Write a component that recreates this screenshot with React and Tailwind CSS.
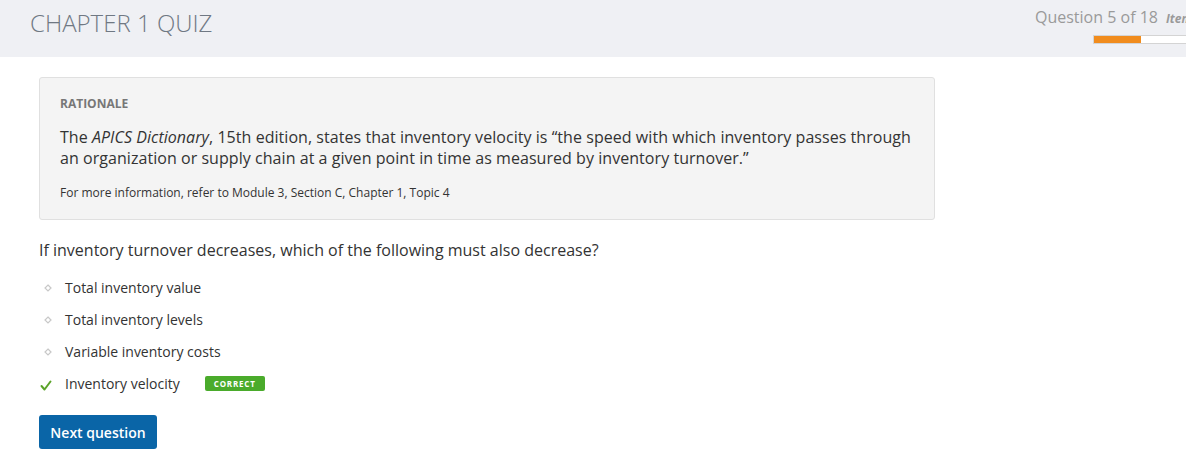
import React from 'react';

const options = [
  { label: 'Total inventory value', correct: false },
  { label: 'Total inventory levels', correct: false },
  { label: 'Variable inventory costs', correct: false },
  { label: 'Inventory velocity', correct: true },
];

const Bullet = () => (
  <svg width="8" height="8" viewBox="0 0 8 8" className="mt-px">
    <path d="M4 1 L7 4 L4 7 L1 4 Z" fill="none" stroke="#c8c8c8" strokeWidth="1.2" />
  </svg>
);

const Check = () => (
  <svg width="12" height="11" viewBox="0 0 12 11" className="mt-[4px]">
    <path d="M1.5 6 L4.5 9.5 L10.5 1.5" fill="none" stroke="#5ba329" strokeWidth="2" strokeLinecap="round" strokeLinejoin="round" />
  </svg>
);

export default function App() {
  return (
    <div className="w-[1186px] h-[465px] overflow-hidden bg-white font-['Open_Sans',sans-serif] text-[#333]">
      {/* header */}
      <div className="h-[57px] bg-[#eff0f4] flex overflow-hidden">
        <h1 className="flex-1 pl-[30px] pt-[5px] text-[24px] font-light text-[#6f7883]">CHAPTER 1 QUIZ</h1>
        <div className="w-[151px] shrink-0 pt-[5px] overflow-hidden">
          <div className="flex items-baseline gap-[8px] whitespace-nowrap">
            <span className="text-[16px] text-[#9a9a9a]">Question 5 of 18</span>
            <span className="text-[12px] italic font-bold text-[#9a9a9a]">Item</span>
          </div>
          <div className="mt-[6px] ml-[58px] w-[133px] h-[9px] bg-white border border-[#d4d4d4]">
            <div className="w-[47px] h-full bg-[#f18c1d]"></div>
          </div>
        </div>
      </div>

      <div className="pl-[39px] pt-[20px]">
        {/* rationale */}
        <div className="w-[896px] h-[143px] bg-[#f4f4f4] border border-[#e0e0e0] rounded-[3px] px-[20px] pt-[17px]">
          <div className="text-[12px] font-bold text-[#777] leading-[18px]">RATIONALE</div>
          <p className="mt-[14px] text-[16px] leading-[21px] text-[#333] tracking-[0.05px]">
            The <em>APICS Dictionary</em>, 15th edition, states that inventory velocity is “the speed with which inventory passes through an organization or supply chain at a given point in time as measured by inventory turnover.”
          </p>
          <p className="mt-[15px] text-[12px] leading-[18px] text-[#333]">
            For more information, refer to Module 3, Section C, Chapter 1, Topic 4
          </p>
        </div>

        {/* question */}
        <p className="mt-[19px] text-[16px] leading-[22px] text-[#333]">
          If inventory turnover decreases, which of the following must also decrease?
        </p>

        <ul className="mt-[16px] flex flex-col gap-[12px]">
          {options.map((o) => (
            <li key={o.label} className="flex items-center h-[20px] text-[14px] text-[#333]">
              <span className="w-[26px] flex justify-start pl-[1px]">
                {o.correct ? <Check /> : <span className="pl-[4px] flex"><Bullet /></span>}
              </span>
              <span>{o.label}</span>
              {o.correct && (
                <span className="ml-[25px] h-[15px] px-[9px] bg-[#4aab2b] rounded-[2px] text-white text-[8px] font-bold tracking-[0.8px] leading-[15px]">
                  CORRECT
                </span>
              )}
            </li>
          ))}
        </ul>

        <button className="mt-[22px] w-[118px] h-[34px] bg-[#0a65a7] rounded-[3px] text-white text-[14px] font-semibold">
          Next question
        </button>
      </div>
    </div>
  );
}
